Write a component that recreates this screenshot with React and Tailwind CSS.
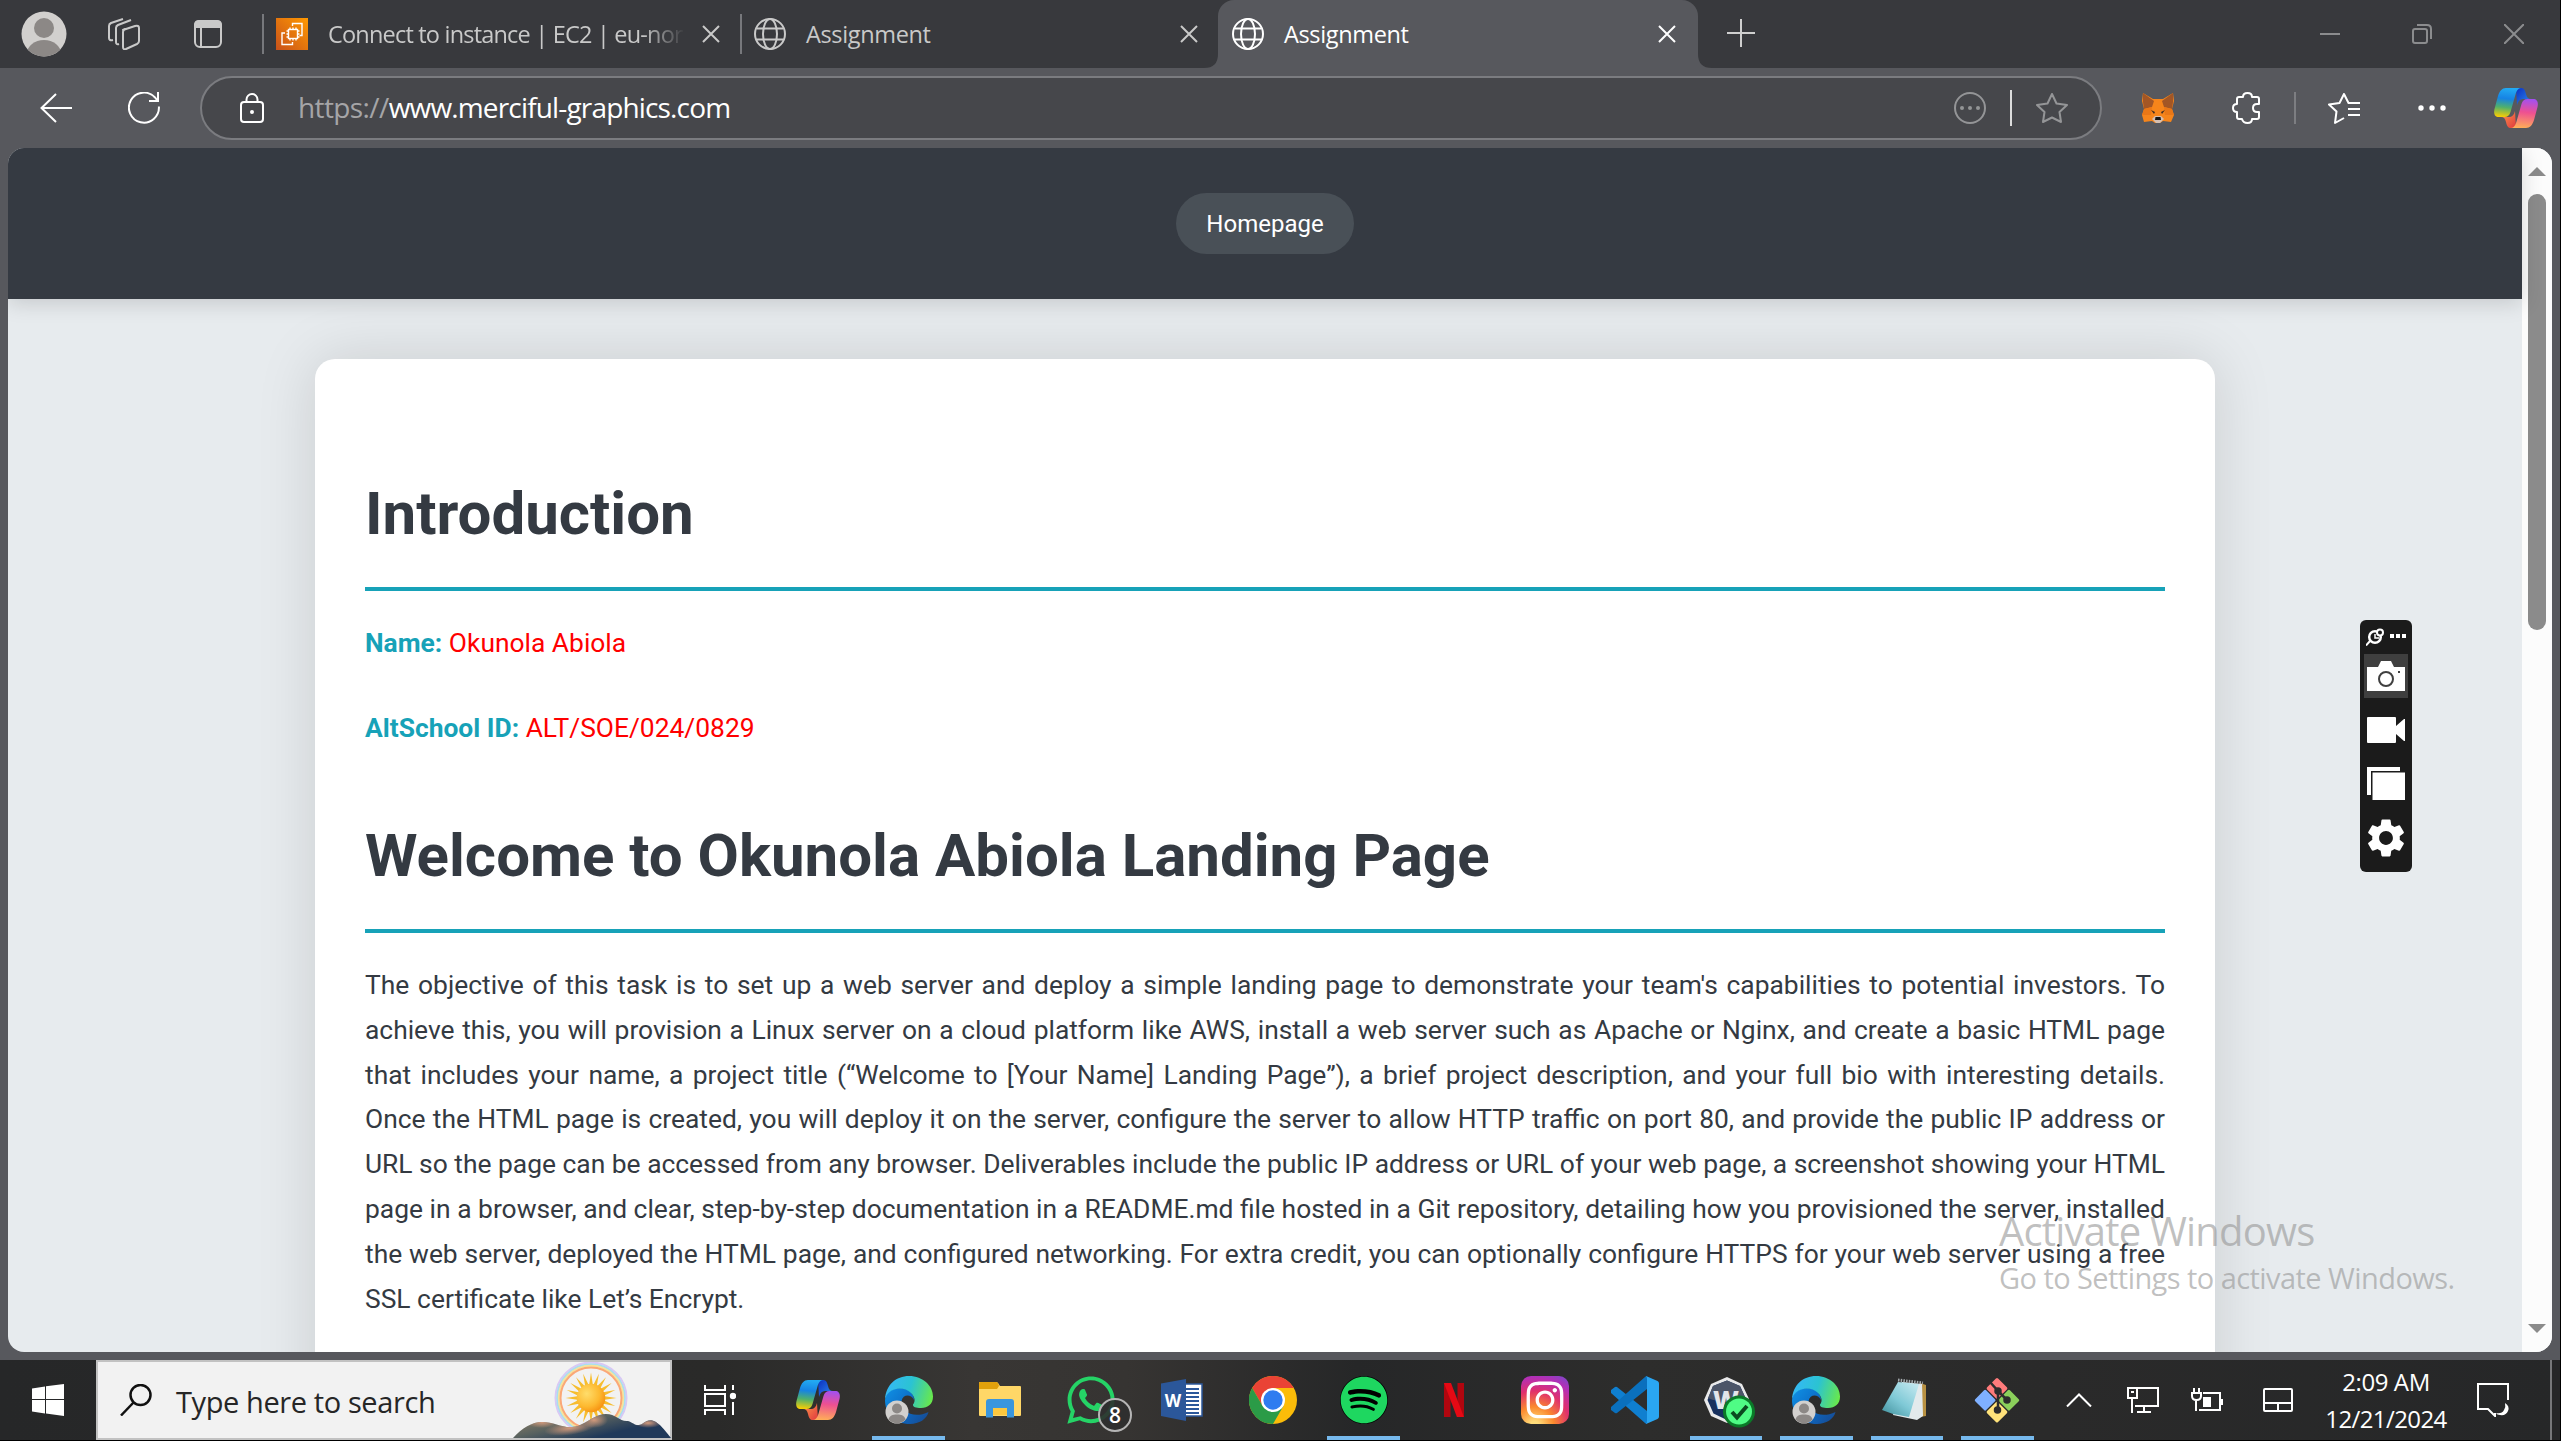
import React from "react";
import { FaWhatsapp, FaSpotify, FaInstagram } from "react-icons/fa";
import { MdSettings } from "react-icons/md";

const OBJECTIVE = [
  "The objective of this task is to set up a web server and deploy a simple landing page to demonstrate your team's capabilities to potential investors. To",
  "achieve this, you will provision a Linux server on a cloud platform like AWS, install a web server such as Apache or Nginx, and create a basic HTML page",
  "that includes your name, a project title (“Welcome to [Your Name] Landing Page”), a brief project description, and your full bio with interesting details.",
  "Once the HTML page is created, you will deploy it on the server, configure the server to allow HTTP traffic on port 80, and provide the public IP address or",
  "URL so the page can be accessed from any browser. Deliverables include the public IP address or URL of your web page, a screenshot showing your HTML",
  "page in a browser, and clear, step-by-step documentation in a README.md file hosted in a Git repository, detailing how you provisioned the server, installed",
  "the web server, deployed the HTML page, and configured networking. For extra credit, you can optionally configure HTTPS for your web server using a free",
];

function Avatar({ className }) {
  return (
    <svg viewBox="0 0 46 46" className={className}>
      <clipPath id="avatarClip">
        <circle cx="23" cy="23" r="22.5" />
      </clipPath>
      <circle cx="23" cy="23" r="22.5" fill="#d2d0ce" />
      <g clipPath="url(#avatarClip)" fill="#8c8886">
        <circle cx="23" cy="17" r="10" />
        <ellipse cx="23" cy="43" rx="17" ry="14" />
      </g>
    </svg>
  );
}

function Globe({ className }) {
  return (
    <svg viewBox="0 0 32 32" className={className} fill="none" stroke="currentColor" strokeWidth="2">
      <circle cx="16" cy="16" r="15" />
      <ellipse cx="16" cy="16" rx="7" ry="15" />
      <path d="M2.5 10.5h27M2.5 21.5h27" />
    </svg>
  );
}

function Close({ className }) {
  return (
    <svg viewBox="0 0 18 18" className={className} fill="none" stroke="currentColor" strokeWidth="2">
      <path d="M1 1l16 16M17 1L1 17" />
    </svg>
  );
}

function Copilot({ className, id }) {
  return (
    <svg viewBox="0 0 44 40" className={className}>
      <defs>
        <linearGradient id={id + "a"} x1="0.3" y1="0" x2="0.2" y2="1">
          <stop offset="0" stopColor="#22a9f2" />
          <stop offset="0.35" stopColor="#1683e4" />
          <stop offset="0.65" stopColor="#4fb06c" />
          <stop offset="1" stopColor="#ffcf00" />
        </linearGradient>
        <linearGradient id={id + "b"} x1="0.5" y1="0" x2="0.4" y2="1">
          <stop offset="0" stopColor="#a450ee" />
          <stop offset="0.45" stopColor="#ee5091" />
          <stop offset="1" stopColor="#ffae58" />
        </linearGradient>
        <linearGradient id={id + "c"} x1="0" y1="0" x2="1" y2="1">
          <stop offset="0" stopColor="#0c2fc0" />
          <stop offset="1" stopColor="#2b8cf2" />
        </linearGradient>
        <linearGradient id={id + "d"} x1="0" y1="0" x2="1" y2="1">
          <stop offset="0" stopColor="#ff9a4a" />
          <stop offset="1" stopColor="#e0383f" />
        </linearGradient>
      </defs>
      <path d="M22 0h5c3 0 4 2 5 6 .8 3.500 2 5 5 5h-8c-3 0-5 2-6 6z" fill={`url(#${id}c)`} />
      <path d="M22 40h-5c-3 0-4-2-5-6-.8-3.500-2-5-5-5h8c3 0 5-2 6-6z" fill={`url(#${id}d)`} />
      <path d="M12 0h15c-3 0-4.500 3-5.500 6.500L16.500 24c-1 3.500-3 5-6 5H5c-4.500 0-5.500-3.500-4.500-8L4 8C5.500 3 8 0 12 0z" fill={`url(#${id}a)`} />
      <path d="M32 40H17c3 0 4.500-3 5.500-6.500L27.500 16c1-3.500 3-5 6-5H39c4.500 0 5.500 3.500 4.500 8L40 32c-1.500 5-4 8-8 8z" fill={`url(#${id}b)`} />
    </svg>
  );
}

function Edge({ id }) {
  return (
    <svg viewBox="0 0 48 48" className="size-12">
      <defs>
        <linearGradient id={id + "a"} x1="0" y1="0.4" x2="1" y2="0.6">
          <stop offset="0" stopColor="#35b8f6" />
          <stop offset="0.5" stopColor="#2bc3d2" />
          <stop offset="1" stopColor="#68e84c" />
        </linearGradient>
        <linearGradient id={id + "b"} x1="0" y1="0.2" x2="1" y2="0.9">
          <stop offset="0" stopColor="#0f8be0" />
          <stop offset="0.5" stopColor="#0c6ac4" />
          <stop offset="1" stopColor="#174a92" />
        </linearGradient>
      </defs>
      <path d="M0 24C1 16 8 12 15 12c8 0 14 5 14 12-3-6-11-6-12.500 1C15 36 29 43 43.500 36 42 43 34 48 25 48 10 48 0 38 0 24z" fill={`url(#${id}b)`} />
      <path d="M0 23C1 9 11 0 24 0c14 0 24 10 24 20.500C48 28 43 32 36 32c-5 0-8.500-1-8-3.500 3-3.500 1.500-8-2-11.500C18 9.500 4 11.500 0 23z" fill={`url(#${id}a)`} />
      <circle cx="12" cy="36" r="11.500" fill="#d2d0ce" />
      <circle cx="12" cy="32.500" r="5" fill="#8c8886" />
      <path d="M3.500 43.500c1-4 4-5 8.500-5s7.500 1 8.500 5a11.500 11.500 0 0 1-17 0z" fill="#8c8886" />
    </svg>
  );
}

function Fox() {
  return (
    <svg viewBox="0 0 32 30" className="h-[30px] w-8">
      <path d="M1 0l10 6h10l10-6 1 8-2 8 2 6-3 7-8-1-3 2h-5l-3-2-8 1-2-7 2-6-2-8z" fill="#f6851b" />
      <path d="M1 0l11 8-2 6-8 2-1-7zM31 0L20 8l2 6 8 2 1-7z" fill="#a35625" />
      <path d="M2 16l8-2-1 8-9 0zM30 16l-8-2 1 8 9 0z" fill="#e97717" />
      <path d="M9 17l4 2-1 2zM23 17l-4 2 1 2z" fill="#3b2b25" />
      <path d="M10 26l3-3h6l3 3-4 4h-4z" fill="#d5bfb2" />
      <path d="M13.500 24h5l.5 3h-6z" fill="#161616" />
    </svg>
  );
}

function Tab({ title, active }) {
  return (
    <div className={"flex h-full items-center " + (active ? "w-[480px] pl-[14px] pr-[22px] text-white" : "w-[476px] pl-[12px] pr-[20px] text-[#c9c9c9]")}>
      <Globe className="size-8 shrink-0" />
      <span className="ml-5 whitespace-nowrap text-[23.500px] leading-8 tracking-[-0.35px]">{title}</span>
      <Close className="ml-auto size-[18px]" />
    </div>
  );
}

function TabStrip() {
  return (
    <div className="flex h-[68px] bg-[#38393d] text-[#c9c9c9]">
      <div className="flex w-[262px] shrink-0 items-center pl-[21px]">
        <Avatar className="size-[46px]" />
        <svg viewBox="0 0 34 32" className="ml-10 h-8 w-[34px]" fill="none" stroke="currentColor" strokeWidth="2" strokeLinejoin="round">
          <path d="M16 12l12-4q4-1 4 2v13q0 2-2 3l-11 5q-3 1-3-2V14q0-2 2-3z" />
          <path d="M12 26q-3 1-3-2V10q0-2 2-3l13-5M6 22q-4 1-4-2V8q0-2 2-3l12-4" />
        </svg>
        <svg viewBox="0 0 30 30" className="ml-[52px] size-[30px]">
          <rect x="2" y="2" width="26" height="26" rx="5" fill="none" stroke="currentColor" strokeWidth="2" />
          <path d="M1 9V6q0-5 5-5h18q5 0 5 5v3z" fill="currentColor" />
          <path d="M8 9v19" stroke="currentColor" strokeWidth="2" />
        </svg>
      </div>
      <div className="my-[14px] w-[2px] bg-[#77787c]" />
      <div className="flex w-[476px] items-center pl-3 pr-[20px]">
        <svg viewBox="0 0 32 32" className="size-8 shrink-0">
          <defs>
            <linearGradient id="ec2" x1="0" y1="1" x2="1" y2="0">
              <stop offset="0" stopColor="#c8511b" />
              <stop offset="1" stopColor="#ff9900" />
            </linearGradient>
          </defs>
          <rect width="32" height="32" fill="url(#ec2)" />
          <g fill="none" stroke="#fff" strokeWidth="1.400">
            <rect x="12.500" y="11.500" width="9" height="9" />
            <path d="M14 11.500v-2M17 11.500v-2M20 11.500v-2M14 22.500v-2M17 22.500v-2M20 22.500v-2M12.500 13h-2M12.500 16h-2M12.500 19h-2M23.500 13h-2M23.500 16h-2M23.500 19h-2" />
            <path d="M16.500 8V5.500h9.500v12h-2.500M9 15H6v11.500h10.500V24" />
          </g>
        </svg>
        <span className="ml-5 w-[357px] overflow-hidden whitespace-nowrap text-[23.500px] leading-8 tracking-[-0.8px] [mask-image:linear-gradient(to_right,black_88%,transparent)]">Connect to instance | EC2 | eu-nor</span>
        <Close className="ml-auto size-[18px]" />
      </div>
      <div className="my-[14px] w-[2px] bg-[#77787c]" />
      <Tab title="Assignment" />
      <div className="relative h-full rounded-t-2xl bg-[#57585d]">
        <svg viewBox="0 0 14 14" className="absolute bottom-0 -left-[14px] size-[14px]"><path d="M14 0v14H0Q14 14 14 0z" fill="#57585d" /></svg>
        <Tab title="Assignment" active />
        <svg viewBox="0 0 14 14" className="absolute bottom-0 -right-[14px] size-[14px]"><path d="M0 0v14h14Q0 14 0 0z" fill="#57585d" /></svg>
      </div>
      <svg viewBox="0 0 28 28" className="ml-[29px] mt-[19px] size-7" stroke="#cfcfcf" strokeWidth="2"><path d="M0 14h28M14 0v28" /></svg>
      <div className="ml-auto mr-[36px] flex items-center gap-[72px] text-[#8b8c8e]">
        <div className="h-[2px] w-5 bg-current" />
        <svg viewBox="0 0 20 20" className="size-5" fill="none" stroke="currentColor" strokeWidth="2">
          <rect x="1" y="5" width="14" height="14" rx="2" />
          <path d="M5 1h10q4 0 4 4v10" />
        </svg>
        <svg viewBox="0 0 20 20" className="size-5" stroke="currentColor" strokeWidth="2"><path d="M0 0l20 20M20 0L0 20" /></svg>
      </div>
    </div>
  );
}

function Toolbar() {
  return (
    <div className="flex h-20 items-center bg-[#57585d] text-white">
      <svg viewBox="0 0 32 30" className="ml-10 h-[30px] w-8" fill="none" stroke="currentColor" strokeWidth="2"><path d="M32 15H1M16 1L1.500 15 16 29" /></svg>
      <svg viewBox="0 0 32 32" className="ml-14 size-8" fill="none" stroke="currentColor" strokeWidth="2"><path d="M30.900 14.500A15 15 0 1 1 27 5.500l2 2.500M30 0v9h-9" /></svg>
      <div className="ml-10 flex h-16 w-[1902px] items-center rounded-full border-2 border-[#7b7c80] bg-[#46474b] pl-[38px] pr-8">
        <svg viewBox="0 0 24 30" className="h-[30px] w-6" fill="none" stroke="currentColor" strokeWidth="2">
          <rect x="1" y="9" width="22" height="20" rx="3" />
          <path d="M6.500 9V6.500a5.500 5.500 0 0 1 11 0V9" />
          <circle cx="12" cy="19" r="1" fill="currentColor" />
        </svg>
        <span className="mb-[2px] ml-[34px] text-[28px] leading-9 tracking-[-0.84px]"><span className="text-[#a5a5a7] tracking-[-0.600px]">https://</span>www.merciful-graphics.com</span>
        <svg viewBox="0 0 32 32" className="ml-auto size-8 text-[#949597]" fill="none" stroke="currentColor" strokeWidth="2">
          <circle cx="16" cy="16" r="15" />
          <g fill="currentColor" stroke="none"><circle cx="8" cy="16" r="2" /><circle cx="16" cy="16" r="2" /><circle cx="24" cy="16" r="2" /></g>
        </svg>
        <div className="ml-6 h-9 w-[2px] bg-[#dcdcdc]" />
        <svg viewBox="0 0 32 30" className="ml-6 h-[30px] w-8 text-[#949597]" fill="none" stroke="currentColor" strokeWidth="2" strokeLinejoin="round">
          <path d="M16 1l4.500 9.500 10.500 1.500-7.500 7L25 29l-9-4.500L7 29l1.500-10L1 12l10.500-1.500z" />
        </svg>
      </div>
      <div className="ml-10"><Fox /></div>
      <svg viewBox="0 0 28 32" className="ml-[58px] h-8 w-7" fill="none" stroke="currentColor" strokeWidth="2" strokeLinejoin="round">
        <path d="M5 7q0-2 2-2h4q0-4 4.500-4t4.500 4h5q2 0 2 2v5h-2q-4 0-4 4t4 4h2v5q0 2-2 2h-5q0 4-4.500 4T10 27H7q-2 0-2-2v-5q-4 0-4-4t4-4z" />
      </svg>
      <div className="ml-[34px] h-8 w-[2px] bg-[#7d7e82]" />
      <svg viewBox="0 0 32 32" className="ml-8 size-8" fill="none" stroke="currentColor" strokeWidth="2" strokeLinejoin="round">
        <path d="M32 11H20.500L16 2l-4.500 9L1 12.500l7.500 7L7 31l9-5M20 17h12M20 23h12" />
      </svg>
      <svg viewBox="0 0 28 6" className="ml-[58px] h-[6px] w-7" fill="currentColor"><circle cx="3" cy="3" r="2.700" /><circle cx="14" cy="3" r="2.700" /><circle cx="25" cy="3" r="2.700" /></svg>
      <Copilot id="cpt" className="ml-12 h-10 w-11" />
    </div>
  );
}

function Recorder() {
  return (
    <div className="absolute left-[2360px] top-[620px] flex h-[252px] w-[52px] flex-col items-center rounded-md bg-[#1b1b1b] text-white">
      <svg viewBox="0 0 40 18" className="mt-2 h-[18px] w-10 shrink-0">
        <path d="M0 17.500L4 13" stroke="#fff" strokeWidth="2" fill="none" />
        <circle cx="9" cy="9" r="5.800" fill="none" stroke="#fff" strokeWidth="2.500" />
        <circle cx="14" cy="4.500" r="3" fill="#1b1b1b" stroke="#fff" strokeWidth="2" />
        <path d="M9 6v4h4" stroke="#fff" strokeWidth="1.500" fill="none" />
        <path d="M24 6h4v4h-4zM30 6h4v4h-4zM36 6h4v4h-4z" fill="#fff" />
      </svg>
      <div className="mt-2 flex size-11 shrink-0 items-center justify-center bg-[#3f3f3f]">
        <svg viewBox="0 0 38 30" className="h-[30px] w-[38px]">
          <path d="M0 6h11l3-6h10l3 6h11v24H0z" fill="#fff" />
          <circle cx="19" cy="18" r="7" fill="none" stroke="#3f3f3f" strokeWidth="2" />
          <rect x="31" y="10" width="2" height="2" fill="#3f3f3f" />
        </svg>
      </div>
      <svg viewBox="0 0 38 26" className="mt-[19px] h-[26px] w-[38px] shrink-0" fill="#fff"><path d="M1 0h27q1 0 1 1v8l8-7h1v22h-1l-8-7v8q0 1-1 1H1q-1 0-1-1V1q0-1 1-1z" /></svg>
      <svg viewBox="0 0 38 34" className="mt-6 h-[34px] w-[38px] shrink-0" fill="#fff"><path d="M0 0h33v4H4v24H0zM5.500 5.500H38V33H5.500z" /></svg>
      <MdSettings className="mt-[14px] size-[46px] shrink-0" />
    </div>
  );
}

function Heading({ children }) {
  return (
    <h1 className="border-b-4 border-[#17a2b8] pb-[19px] text-[60px] leading-[108px] font-bold text-[#343a42]">{children}</h1>
  );
}

function Field({ label, value }) {
  return (
    <p className="leading-[45px] text-[#ff0000]">
      <strong className="font-bold text-[#17a2b8]">{label}</strong> {value}
    </p>
  );
}

function Page() {
  return (
    <div className="mx-2 flex h-[1204px] overflow-hidden rounded-2xl bg-[#e7ebee] font-[Roboto,sans-serif] text-[26.400px]">
      <div className="h-full w-[2514px]">
        <header className="relative flex h-[151px] items-center justify-center bg-[#353a42] shadow-[0_4px_20px_rgba(0,0,0,0.15)]">
          <a className="flex h-[61px] w-[178px] items-center justify-center rounded-full bg-[#495057] pt-px text-[24px] text-white">Homepage</a>
        </header>
        <main className="mx-auto mt-[60px] h-[1100px] w-[1900px] rounded-[20px] bg-white px-[50px] pt-[101px] text-[#343a42] shadow-[0_0_60px_rgba(0,0,0,0.13)]">
          <Heading>Introduction</Heading>
          <div className="mt-[30px] flex flex-col gap-10">
            <Field label="Name:" value="Okunola Abiola" />
            <Field label="AltSchool ID:" value="ALT/SOE/024/0829" />
          </div>
          <div className="mt-[51px]">
            <Heading>Welcome to Okunola Abiola Landing Page</Heading>
          </div>
          <p className="mt-[30px] leading-[44.800px]">
            {OBJECTIVE.map((line) => (
              <span key={line} className="block text-justify [text-align-last:justify] [word-spacing:-1px]">{line} </span>
            ))}
            <span className="block">SSL certificate like Let’s Encrypt.</span>
          </p>
        </main>
      </div>
      <div className="flex w-[30px] flex-col items-center bg-[#fcfcfc] pb-[19px] pt-[19px]">
        <svg viewBox="0 0 18 9" className="h-[9px] w-[18px] shrink-0" fill="#8b8b8b"><path d="M9 0l9 9H0z" /></svg>
        <div className="mt-[18px] h-[436px] w-[18px] rounded-full bg-[#8b8b8b]" />
        <svg viewBox="0 0 18 9" className="mt-auto h-[9px] w-[18px] shrink-0" fill="#8b8b8b"><path d="M9 9l9-9H0z" /></svg>
      </div>
    </div>
  );
}

function SearchArt() {
  return (
    <svg viewBox="0 0 160 76" className="h-[76px] w-40 shrink-0 self-end">
      <defs>
        <radialGradient id="sun" cx="0.35" cy="0.35" r="0.75">
          <stop offset="0" stopColor="#ffdd6b" />
          <stop offset="0.6" stopColor="#fdb930" />
          <stop offset="1" stopColor="#f58a0c" />
        </radialGradient>
        <linearGradient id="hill" x1="0.3" y1="0.6" x2="0.5" y2="1">
          <stop offset="0" stopColor="#8d7f66" />
          <stop offset="0.5" stopColor="#59625f" />
          <stop offset="1" stopColor="#20395a" />
        </linearGradient>
        <radialGradient id="glow"><stop offset="0" stopColor="#d39a7c" /><stop offset="1" stopColor="#d39a7c" stopOpacity="0" /></radialGradient>
        <clipPath id="hillClip"><path d="M1 76C10 66 20 60 30 60c14 0 22 8 36 4C76 60 84 52 94 52c10 0 14 8 22 7 6 2 8 6 14 3 5-4 9-5 14-2 6 4 10 10 15 16z" /></clipPath>
      </defs>
      <g fill="none" strokeWidth="2">
        <circle cx="79" cy="36" r="35.500" stroke="#d9c8f5" />
        <circle cx="79" cy="36" r="33.800" stroke="#a9def0" />
        <circle cx="79" cy="36" r="32.200" stroke="#f6e39a" />
        <circle cx="79" cy="36" r="30.500" stroke="#fba877" />
      </g>
      <g fill="#f6bd2e">
        {Array.from({ length: 20 }, (_, i) => (
          <path key={i} d="M77 24l2-13.500L81 24z" transform={`rotate(${i * 18} 79 36)`} />
        ))}
      </g>
      <circle cx="79" cy="36" r="14.300" fill="url(#sun)" />
      <g clipPath="url(#hillClip)">
        <rect width="160" height="76" fill="url(#hill)" />
        <ellipse cx="30" cy="60" rx="16" ry="6" fill="url(#glow)" />
        <ellipse cx="58" cy="66" rx="26" ry="7" fill="url(#glow)" transform="rotate(-8 58 66)" />
        <ellipse cx="82" cy="58" rx="14" ry="8" fill="url(#glow)" />
        <ellipse cx="136" cy="61" rx="14" ry="5" fill="url(#glow)" />
      </g>
    </svg>
  );
}

function Slot({ open, narrow, children }) {
  return (
    <div className={"relative flex h-20 shrink-0 items-center justify-center " + (narrow ? "w-[90.500px]" : "w-[91px]")}>
      {children}
      {open && <div className="absolute inset-x-[9px] bottom-0 h-1 bg-[#76b9ed]" />}
    </div>
  );
}

function Taskbar() {
  return (
    <div className="flex h-20 items-center bg-[linear-gradient(90deg,#262728_0%,#2a2a29_28%,#383634_38%,#363432_44%,#262728_53%,#2d2d2c_64%,#2a2a2a_80%,#262728_100%)] text-white">
      <div className="flex w-24 justify-center">
        <svg viewBox="0 0 32 32" className="size-8" fill="#fff"><path d="M0 4.500L13 2.500V15H0zM14 2.300L32 0v15H14zM0 16h13v13.500L0 27.500zM14 16h18v16l-18-2.500z" /></svg>
      </div>
      <div className="flex h-20 w-[576px] items-center border-2 border-[#c2c2c2] bg-[#f2f2f2] pl-[22px] text-[#262626]">
        <svg viewBox="0 0 32 32" className="size-8 shrink-0" fill="none" stroke="#111" strokeWidth="2.500"><circle cx="20.500" cy="11" r="10" /><path d="M13.500 18.500L1 31.500" /></svg>
        <span className="ml-6 mt-1 w-[336px] shrink-0 whitespace-nowrap text-[29px] leading-10 tracking-[-0.400px]">Type here to search</span>
        <SearchArt />
      </div>
      <div className="flex w-[100px] justify-center pr-1">
        <svg viewBox="0 0 32 30" className="h-[30px] w-8" fill="none" stroke="#fff" strokeWidth="2"><path d="M1 0v5h20V0M1 9h20v12H1zM1 30v-5h20v5M29 0v5M29 17v13" /><circle cx="29" cy="11" r="3.200" fill="#fff" stroke="none" /></svg>
      </div>
      <Slot><Copilot id="cpb" className="h-10 w-11" /></Slot>
      <Slot open><Edge id="e1" /></Slot>
      <Slot>
        <svg viewBox="0 0 42 36" className="h-9 w-[42px]">
          <path d="M0 8V1q0-1 1-1h16q1 0 2 1l2 3h20q1 0 1 1v28q0 1-1 1H1q-1 0-1-1z" fill="#ffd767" />
          <path d="M0 7V1q0-1 1-1h16q1 0 2 1l1 3-2 3z" fill="#e2a10c" />
          <path d="M7 35.500V20q0-3 3-3h22q3 0 3 3v15.500h-7V27H14v8.500z" fill="#3a96dd" />
          <path d="M14 26h14v7H14z" fill="#fcc73e" />
        </svg>
      </Slot>
      <Slot>
        <FaWhatsapp className="size-[54px] shrink-0 text-[#25d366]" />
        <div className="absolute left-[53px] top-[38px] flex size-[34px] items-center justify-center rounded-full border-2 border-[#b5b5b5] bg-[#2f2f2f]/90 text-[21px] leading-none font-semibold">8</div>
      </Slot>
      <Slot>
        <svg viewBox="0 0 42 42" className="size-[42px]">
          <rect x="24" y="5" width="17" height="32" fill="#fff" stroke="#2b579a" strokeWidth="1.500" />
          <path d="M25 10h13M25 14h13M25 18h13M25 22h13M25 26h13M25 30h13M25 34h13" stroke="#2b579a" strokeWidth="2" />
          <path d="M0 4.500L25 0v42L0 37z" fill="#2b579a" />
          <text x="12" y="28" textAnchor="middle" fontFamily="Open Sans, sans-serif" fontWeight="700" fontSize="17" fill="#fff">W</text>
        </svg>
      </Slot>
      <Slot>
        <svg viewBox="0 0 48 48" className="size-12">
          <circle cx="24" cy="24" r="24" fill="#fbbc09" />
          <path d="M3.200 12A24 24 0 0 1 44.800 12H24L13.600 30z" fill="#ea4335" />
          <path d="M13.600 30L3.200 12A24 24 0 0 0 24 48l10.400-18z" fill="#2b9b47" />
          <circle cx="24" cy="24" r="12" fill="#fff" />
          <circle cx="24" cy="24" r="9.700" fill="#2f7cf0" />
        </svg>
      </Slot>
      <Slot open>
        <div className="size-12 rounded-full bg-black"><FaSpotify className="size-12 text-[#1ed760]" /></div>
      </Slot>
      <Slot narrow>
        <svg viewBox="0 0 20 34" className="h-[34px] w-5">
          <rect x="0" width="6.500" height="34" fill="#b1060f" />
          <rect x="13.500" width="6.500" height="34" fill="#b1060f" />
          <rect x="0" width="7" height="34" fill="#e50914" transform="skewX(20.800)" />
        </svg>
      </Slot>
      <Slot narrow>
        <div className="flex size-12 items-center justify-center rounded-[10px] bg-[radial-gradient(circle_at_28%_105%,#ffdc7a_8%,#fb8a2e_32%,#e0306c_58%,#b42fb5_80%,#5558d8_108%)]">
          <FaInstagram className="size-[42px] text-white" />
        </div>
      </Slot>
      <Slot narrow>
        <svg viewBox="0 0 48 48" className="size-12">
          <path d="M0 14l4-3q1-.5 2 0l30 24v13q-1 0-2-1L0 17q-1-1.500 0-3z" fill="#0f7fd0" />
          <path d="M0 34l4 3q1 .5 2 0l30-24V0q-1 0-2 1L0 31q-1 1.500 0 3z" fill="#0a70bd" />
          <path d="M35 0l11.500 5q1.500.7 1.500 2.500v33q0 1.800-1.500 2.500L35 48q1-.5 1-3V3q0-2.500-1-3z" fill="#2aa6f2" />
        </svg>
      </Slot>
      <Slot narrow open>
        <svg viewBox="0 0 52 52" className="ml-[6px] mt-1 size-[52px]">
          <path d="M24 1L39 8l7 15-6 16-16 8L8 40 1 24 8 8z" fill="#e9e9ea" />
          <path d="M24 4.500L37 10l6 13-6 14-13 7-13.500-6.500L4.500 24 10 10z" fill="#17305e" />
          <path d="M24 4.500L37 10l5 11Q24 30 5 22l5-12z" fill="#4c5568" />
          <text x="23" y="33" textAnchor="middle" fontFamily="Open Sans, sans-serif" fontWeight="800" fontSize="25" fill="#e4e6ea">W</text>
          <circle cx="36" cy="35.500" r="16" fill="#0a7a28" />
          <circle cx="36" cy="35.500" r="13" fill="#4ffc85" />
          <path d="M29 36l5 5.500L44 30" fill="none" stroke="#0b4a20" strokeWidth="4" />
        </svg>
      </Slot>
      <Slot narrow open><Edge id="e2" /></Slot>
      <Slot narrow open>
        <svg viewBox="0 0 46 44" className="-ml-1 h-11 w-[46px]">
          <defs><linearGradient id="note" x1="0" y1="1" x2="0.8" y2="0"><stop offset="0" stopColor="#3d8d99" /><stop offset="0.5" stopColor="#7fc9d6" /><stop offset="1" stopColor="#bfe6ee" /></linearGradient></defs>
          <path d="M38 5l6 2v31l-6 1z" fill="#b89142" />
          <path d="M20 4l20 2 1 32-6 4-24-5z" fill="#e3eaec" />
          <path d="M16 4l21 2-10 33-16-3-11-4z" fill="url(#note)" />
          <path d="M16 2l25 3" stroke="#a7adb0" strokeWidth="3" strokeDasharray="1.500 1.200" />
        </svg>
      </Slot>
      <Slot narrow open>
        <svg viewBox="0 0 48 48" className="size-12">
          <g transform="rotate(45 24 24)">
            <rect x="8" y="8" width="15.500" height="15.500" rx="1.500" fill="#ff7b7b" />
            <rect x="24.800" y="8" width="15.500" height="15.500" rx="1.500" fill="#8bd05b" />
            <rect x="8" y="24.800" width="15.500" height="15.500" rx="1.500" fill="#7fb0ff" />
            <rect x="24.800" y="24.800" width="15.500" height="15.500" rx="1.500" fill="#ffe27a" />
          </g>
          <g fill="#2d2d2d" stroke="#2d2d2d" strokeWidth="2.500"><path d="M17 6l8 9v19M25 15l9 9" fill="none" /><circle cx="25" cy="15" r="2.500" /><circle cx="34" cy="24" r="2.500" /><circle cx="24.500" cy="34" r="2.500" /></g>
        </svg>
      </Slot>
      <div className="ml-auto flex h-20 items-center">
        <svg viewBox="0 0 26 14" className="h-[14px] w-[26px]" fill="none" stroke="#fff" strokeWidth="2"><path d="M1 13.500L13 1.500l12 12" /></svg>
        <svg viewBox="0 0 32 28" className="ml-[35px] h-7 w-8" fill="none" stroke="#fff" strokeWidth="2"><path d="M10 2h21v18H8M1 2h9v10H1zM5 12v15M17 20v6M10 26h14M4 6h3" /></svg>
        <svg viewBox="0 0 32 24" className="ml-8 h-6 w-8" fill="none" stroke="#fff" strokeWidth="2"><path d="M12 5h17v17H8M31 11v6" /><path d="M12 9h8v10h-8z" fill="#fff" stroke="none" /><path d="M3 0v4M8 0v4M1 5h9v3q0 4-4.500 4T1 8zM5 12v11" /></svg>
        <svg viewBox="0 0 30 24" className="ml-10 h-6 w-[30px]" fill="none" stroke="#fff" strokeWidth="2"><rect x="1" y="1" width="28" height="22" rx="1" /><path d="M1 15h28M15 15v8" /></svg>
        <div className="ml-[32px] flex w-[122px] flex-col items-center text-[24px] leading-[37px]">
          <span className="tracking-[-0.400px]">2:09 AM</span>
          <span className="tracking-[-0.600px]">12/21/2024</span>
        </div>
        <svg viewBox="0 0 34 34" className="ml-[30px] h-[34px] w-[34px]" fill="none" stroke="#fff" strokeWidth="2"><path d="M31 17V1H1v25h10l7 7v-3" /><path d="M28 20q5 3 3 8t-8 4q-3 0-4-2 6 1 8-3 2-3 1-7z" fill="#fff" stroke="none" /></svg>
        <div className="ml-[39px] h-20 w-[2px] bg-[#77787a]" />
        <div className="w-2" />
      </div>
    </div>
  );
}

export default function App() {
  return (
    <div className="relative h-[1441px] w-[2561px] overflow-hidden bg-black font-['Open_Sans','Noto_Sans',sans-serif]">
      <div className="w-[2560px]">
        <TabStrip />
        <Toolbar />
        <div className="bg-[#57585d] pb-2"><Page /></div>
        <Taskbar />
      </div>
      <Recorder />
      <div className="absolute left-[1999px] top-[1206px] whitespace-nowrap text-[#969696]/60">
        <div className="text-[40px] leading-[50px] tracking-[-0.800px]">Activate Windows</div>
        <div className="text-[29px] leading-[44px] tracking-[-0.560px]">Go to Settings to activate Windows.</div>
      </div>
    </div>
  );
}
